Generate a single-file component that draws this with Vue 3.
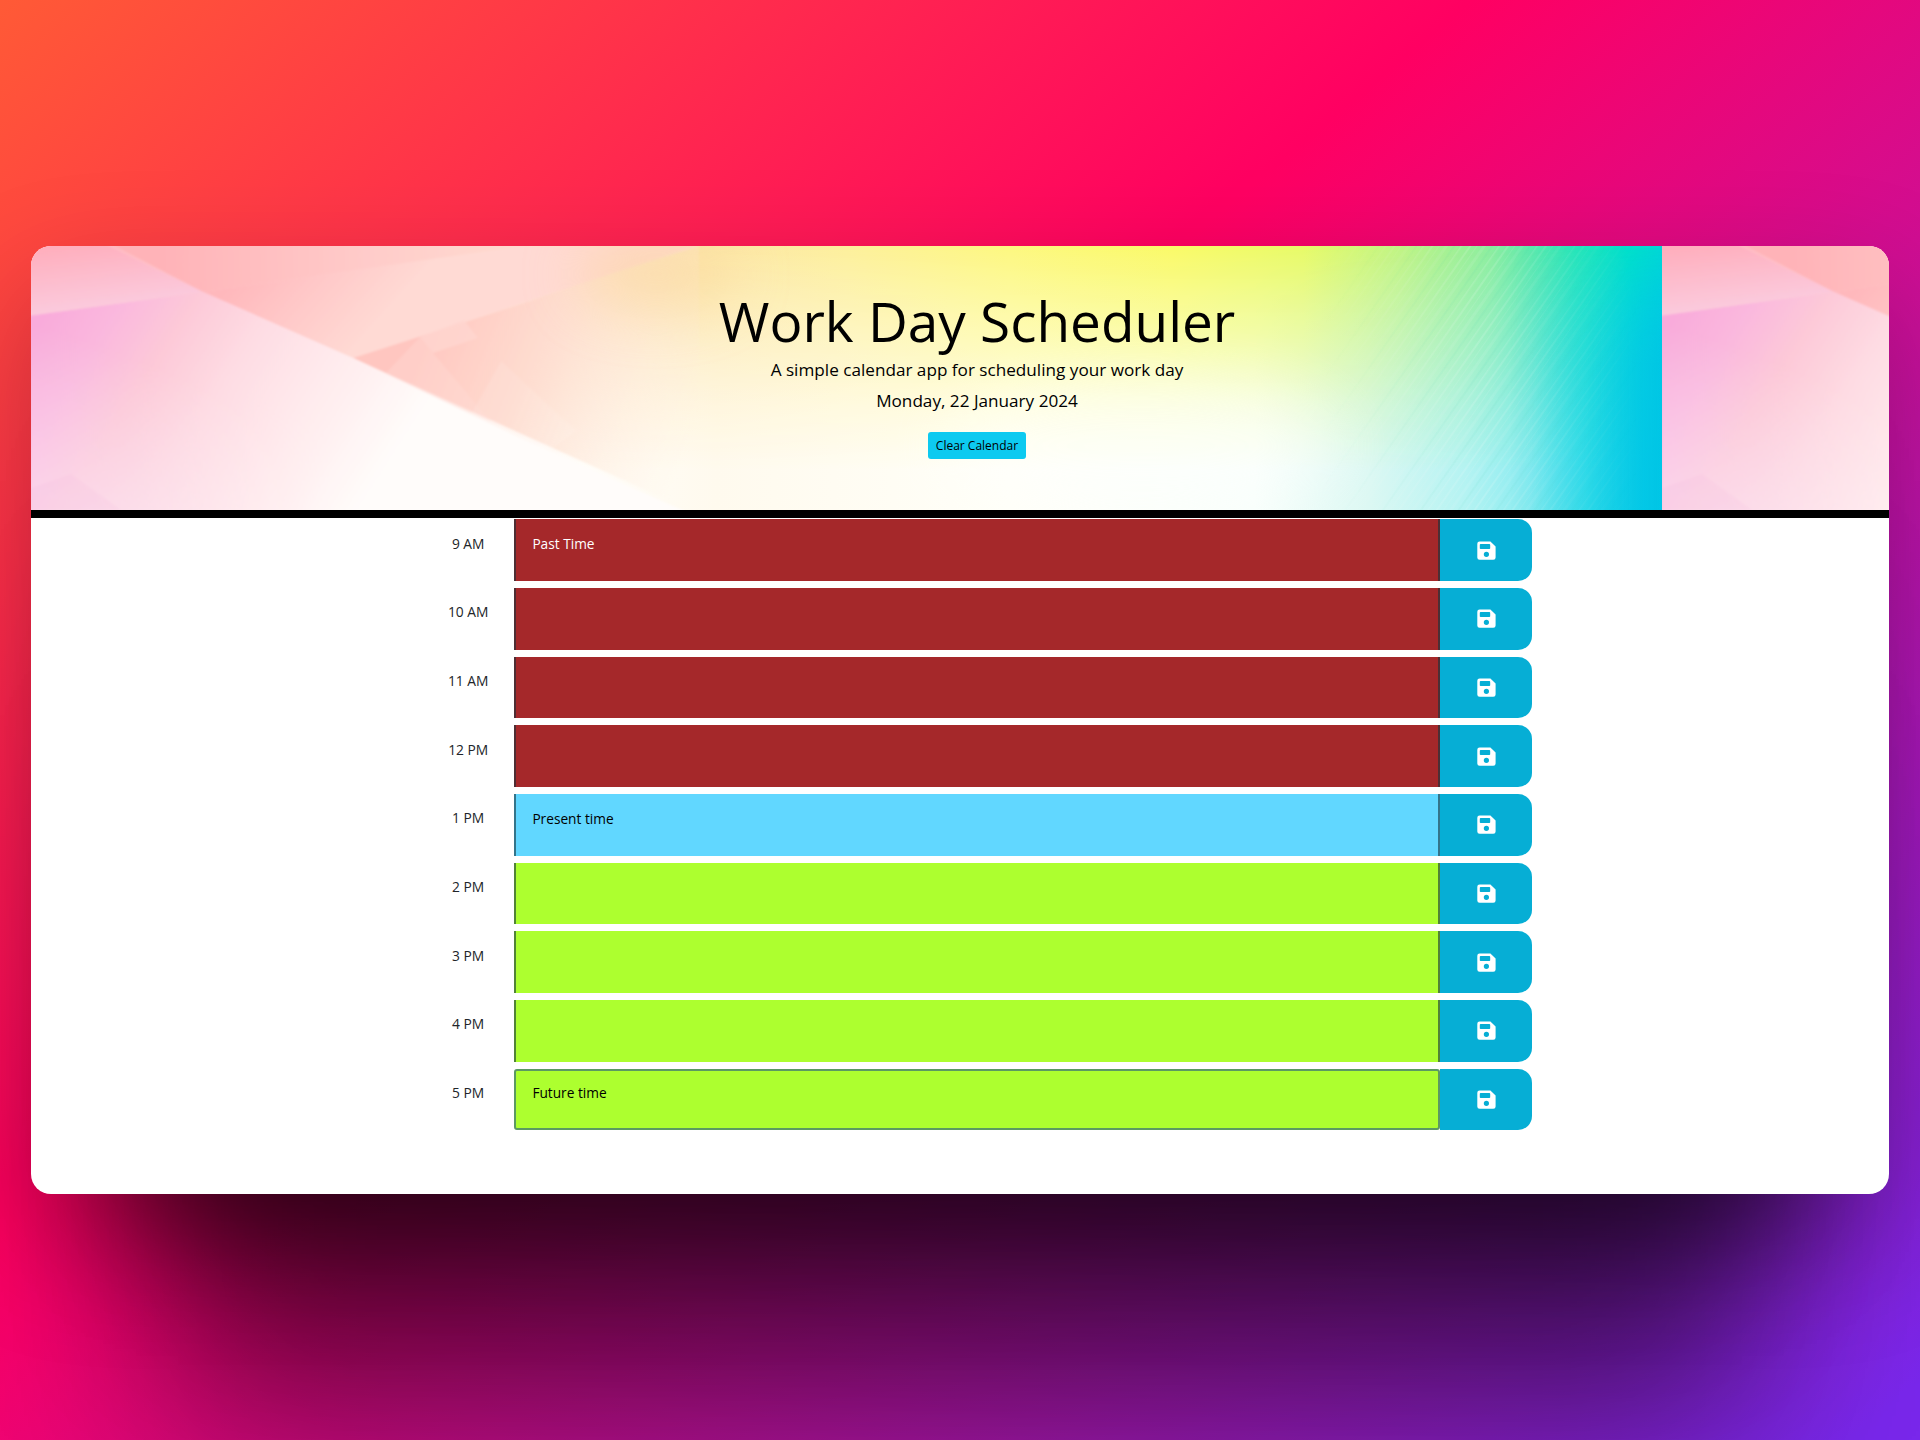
<script setup>
const past = ['9 AM', '10 AM', '11 AM', '12 PM']
const future = ['2 PM', '3 PM', '4 PM', '5 PM']
const notes = { '9 AM': 'Past Time', '1 PM': 'Present time', '5 PM': 'Future time' }

const slots = [
  ...past.map((hour) => ({ hour, state: 'past' })),
  { hour: '1 PM', state: 'present' },
  ...future.map((hour) => ({ hour, state: 'future' })),
].map((slot) => ({ ...slot, note: notes[slot.hour] || '', focused: slot.hour === '5 PM' }))
</script>

<template>
  <div class="stage">
    <main class="card">
      <header class="hero">
        <svg class="art" width="1858" height="264" viewBox="0 0 1858 264" aria-hidden="true">
          <defs>
            <linearGradient id="topRow">
              <stop offset="0" stop-color="#ffb9c4" />
              <stop offset=".12" stop-color="#ffc4c6" />
              <stop offset=".25" stop-color="#ffd6cc" />
              <stop offset=".33" stop-color="#fee2c4" />
              <stop offset=".4" stop-color="#fce4ac" />
              <stop offset=".5" stop-color="#fdf09c" />
              <stop offset=".6" stop-color="#fdf880" />
              <stop offset=".7" stop-color="#fafa68" />
              <stop offset=".78" stop-color="#e8fa68" />
              <stop offset=".84" stop-color="#c0f484" />
              <stop offset=".895" stop-color="#8cee9e" />
              <stop offset=".92" stop-color="#5ce9ac" />
              <stop offset=".947" stop-color="#28e6b9" />
              <stop offset=".98" stop-color="#00e0cc" />
              <stop offset="1" stop-color="#00d8d6" />
            </linearGradient>
            <linearGradient id="bottomRow">
              <stop offset="0" stop-color="#f8c8ee" />
              <stop offset=".06" stop-color="#fad9ec" />
              <stop offset=".13" stop-color="#fde5ea" />
              <stop offset=".22" stop-color="#fff1ef" />
              <stop offset=".33" stop-color="#fffdfa" />
              <stop offset=".42" stop-color="#fffaee" />
              <stop offset=".6" stop-color="#fffff8" />
              <stop offset=".75" stop-color="#f8fffb" />
              <stop offset=".82" stop-color="#dcf8f3" />
              <stop offset=".88" stop-color="#b4f3f2" />
              <stop offset=".92" stop-color="#88ebf0" />
              <stop offset=".955" stop-color="#38dcec" />
              <stop offset=".99" stop-color="#00c6ef" />
            </linearGradient>
            <linearGradient id="fall" x1="0" y1="0" x2="0" y2="1">
              <stop offset="0" stop-color="#000" />
              <stop offset=".25" stop-color="#555" />
              <stop offset=".6" stop-color="#c4c4c4" />
              <stop offset=".85" stop-color="#fff" />
            </linearGradient>
            <mask id="fallMask"><rect width="1631" height="264" fill="url(#fall)" /></mask>

            <linearGradient id="cornerFacet" x1="0" y1="0" x2=".3" y2="1">
              <stop offset="0" stop-color="#ffabb9" />
              <stop offset="1" stop-color="#fbcde0" />
            </linearGradient>
            <linearGradient id="lowerFacet" gradientUnits="userSpaceOnUse" x1="0" y1="90" x2="310" y2="290">
              <stop offset="0" stop-color="#f9abdb" />
              <stop offset=".16" stop-color="#fab8de" />
              <stop offset=".32" stop-color="#fdc9d8" />
              <stop offset=".52" stop-color="#fedde4" />
              <stop offset=".75" stop-color="#ffecee" />
              <stop offset="1" stop-color="#fffcfa" />
            </linearGradient>
            <linearGradient id="lowerFall" gradientUnits="userSpaceOnUse" x1="110" y1="110" x2="60" y2="264">
              <stop offset="0" stop-color="#fbe6f6" stop-opacity="0" />
              <stop offset="1" stop-color="#fbe4f6" stop-opacity=".5" />
            </linearGradient>
            <linearGradient id="lowerFade" gradientUnits="userSpaceOnUse" x1="60" y1="0" x2="300" y2="0">
              <stop offset="0" stop-color="#fff" />
              <stop offset="1" stop-color="#000" />
            </linearGradient>
            <mask id="lowerMask"><rect width="700" height="268" fill="url(#lowerFade)" /></mask>
            <linearGradient id="upperFacet" gradientUnits="userSpaceOnUse" x1="130" y1="10" x2="480" y2="0">
              <stop offset="0" stop-color="#ffb3b8" />
              <stop offset=".6" stop-color="#ffccca" />
              <stop offset="1" stop-color="#ffdacf" />
            </linearGradient>
            <linearGradient id="middleFacet" gradientUnits="userSpaceOnUse" x1="200" y1="40" x2="300" y2="130">
              <stop offset="0" stop-color="#ffb8bc" />
              <stop offset=".45" stop-color="#ffc8c8" />
              <stop offset="1" stop-color="#ffdad4" />
            </linearGradient>
            <linearGradient id="salmonFacet" gradientUnits="userSpaceOnUse" x1="390" y1="90" x2="660" y2="200">
              <stop offset="0" stop-color="#ffc6c0" />
              <stop offset=".4" stop-color="#feddd0" />
              <stop offset="1" stop-color="#fdf0dc" stop-opacity="0" />
            </linearGradient>
            <linearGradient id="aquaFacet" gradientUnits="userSpaceOnUse" x1="1480" y1="0" x2="1631" y2="0">
              <stop offset="0" stop-color="#18d0e0" stop-opacity="0" />
              <stop offset=".5" stop-color="#10d0de" stop-opacity=".3" />
              <stop offset="1" stop-color="#00c5e4" stop-opacity=".85" />
            </linearGradient>
            <linearGradient id="aquaFall" x1="0" y1="0" x2="0" y2="1">
              <stop offset="0" stop-color="#000" />
              <stop offset=".45" stop-color="#fff" />
            </linearGradient>
            <mask id="aquaMask"><rect x="1480" width="151" height="264" fill="url(#aquaFall)" /></mask>
            <linearGradient id="streakFade">
              <stop offset="0" stop-color="#000" />
              <stop offset=".5" stop-color="#fff" />
              <stop offset="1" stop-color="#000" />
            </linearGradient>
            <mask id="streakMask"><rect x="1290" width="320" height="264" fill="url(#streakFade)" /></mask>
            <pattern id="streaks" width="31" height="40" patternUnits="userSpaceOnUse" patternTransform="rotate(35)">
              <rect width="2" height="40" fill="#fff" opacity=".14" />
              <rect x="6" width="1" height="40" fill="#fff" opacity=".1" />
              <rect x="11" width="3" height="40" fill="#fff" opacity=".09" />
              <rect x="18" width="2" height="40" fill="#30c0a0" opacity=".06" />
              <rect x="24" width="1.5" height="40" fill="#fff" opacity=".14" />
            </pattern>
            <filter id="soft" x="-60%" y="-120%" width="220%" height="340%"><feGaussianBlur stdDeviation="28" /></filter>
            <filter id="edge" x="-5%" y="-5%" width="110%" height="110%"><feGaussianBlur stdDeviation="1.2" /></filter>
            <clipPath id="tileClip"><rect width="1631" height="264" /></clipPath>
          </defs>

          <g id="tile" clip-path="url(#tileClip)">
            <rect width="1631" height="264" fill="url(#topRow)" />
            <rect width="1631" height="264" fill="url(#bottomRow)" mask="url(#fallMask)" />
            <g filter="url(#edge)">
              <path d="M76 -4 172 46 492 0 V-4Z" fill="url(#upperFacet)" />
              <path d="M172 46 492 0H668L322 112Z" fill="url(#middleFacet)" />
              <path d="M322 112 496 56 668 -2 V268Z" fill="url(#salmonFacet)" />
              <path d="M389 91 433 74 447 92 402 107Z" fill="#ffd6d0" opacity=".8" />
              <path d="M354 128 389 91 402 107 460 176Z" fill="#ffdcd8" opacity=".35" />
              <path d="M470 115 545 185 515 207 440 168Z" fill="#fff" opacity=".1" />
              <path d="M-4 70 172 46 322 112 487 191 660 268H-4Z" fill="url(#lowerFacet)" />
              <path d="M0 70 172 46 322 112 487 191 660 268H0Z" fill="url(#lowerFall)" mask="url(#lowerMask)" />
              <path d="M-4 -4H70L172 46-4 70Z" fill="url(#cornerFacet)" />
              <path d="M0 242 40 228 90 264H0Z" fill="#f0b4e0" opacity=".15" />
            </g>
            <ellipse cx="625" cy="28" rx="80" ry="35" fill="#fbd58e" opacity=".5" filter="url(#soft)" />
            <ellipse cx="1110" cy="200" rx="200" ry="70" fill="#fff" opacity=".4" filter="url(#soft)" />
            <rect x="1480" width="151" height="264" fill="url(#aquaFacet)" mask="url(#aquaMask)" />
            <rect x="1290" width="320" height="264" fill="url(#streaks)" mask="url(#streakMask)" />
          </g>
          <use href="#tile" x="1631" />
        </svg>
        <h1>Work Day Scheduler</h1>
        <p class="lead">A simple calendar app for scheduling your work day</p>
        <p class="lead date">Monday, 22 January 2024</p>
        <button class="clear" type="button">Clear Calendar</button>
      </header>

      <section class="schedule">
        <div v-for="slot in slots" :key="slot.hour" class="row">
          <div class="hour">{{ slot.hour }}</div>
          <div class="note" :class="[slot.state, { focused: slot.focused }]">{{ slot.note }}</div>
          <button class="save" type="button" aria-label="Save">
            <svg width="19" height="19" viewBox="0 0 19 19">
              <path
                fill="#fff"
                fill-rule="evenodd"
                d="M2.6 .4H13.4L18.6 5.4V16.4A2.3 2.3 0 0 1 16.3 18.7H2.6A2.3 2.3 0 0 1 .3 16.4V2.7A2.3 2.3 0 0 1 2.6 .4ZM3.6 3.1A.8 .8 0 0 0 2.8 3.9V7.2A.8 .8 0 0 0 3.6 8H12.4A.8 .8 0 0 0 13.2 7.2V3.9A.8 .8 0 0 0 12.4 3.1ZM9.4 10.7A2.6 2.6 0 1 0 9.4 15.9 2.6 2.6 0 1 0 9.4 10.7Z"
              />
            </svg>
          </button>
        </div>
      </section>
    </main>
  </div>
</template>

<style>
body {
  margin: 0;
}
</style>

<style scoped>
.stage {
  box-sizing: border-box;
  width: 1920px;
  height: 1440px;
  padding: 246px 31px;
  overflow: hidden;
  background: linear-gradient(140deg, #ff5a36 0%, #ff0062 40.5%, #7a28ec 98%);
  font-family: 'Open Sans', 'Noto Sans', sans-serif;
}

.card {
  width: 1858px;
  height: 948px;
  overflow: hidden;
  border-radius: 20px;
  background: #fff;
  box-shadow:
    0 130px 120px -105px rgba(0, 0, 0, 0.48),
    0 260px 170px -120px rgba(0, 0, 0, 0.34),
    0 390px 170px -140px rgba(0, 0, 0, 0.36),
    0 50px 120px rgba(0, 0, 0, 0.25);
}

.hero {
  position: relative;
  display: flex;
  flex-direction: column;
  align-items: center;
  box-sizing: border-box;
  height: 272px;
  padding: 42px 0 0 34px;
  border-bottom: 8px solid #000;
  color: #000;
}

.art {
  position: absolute;
  top: 0;
  left: 0;
}

.hero > :not(.art) {
  position: relative;
}

h1 {
  margin: 0;
  font-size: 54.9px;
  font-weight: 400;
  line-height: 66px;
  white-space: nowrap;
}

.lead {
  margin: 0;
  font-size: 17.15px;
  line-height: 31px;
  white-space: nowrap;
}

.clear {
  width: 98px;
  height: 27px;
  margin: 16px 0 0;
  padding: 0;
  border: 0;
  border-radius: 3px;
  background: #0dcaf0;
  color: #000;
  font: 12px/27px 'Open Sans', 'Noto Sans', sans-serif;
  white-space: nowrap;
}

.schedule {
  width: 1110px;
  margin-left: 391px;
  padding-top: 1.4px;
}

.row {
  display: flex;
  height: 61.7px;
  margin-bottom: 6.98px;
}

.hour {
  width: 92.4px;
  padding-top: 12.4px;
  box-sizing: border-box;
  color: #212529;
  font-size: 13.8px;
  line-height: 24px;
  text-align: center;
}

.note {
  box-sizing: border-box;
  width: 926px;
  padding: 12.5px 16px;
  border: 0 solid rgba(20, 50, 60, 0.6);
  border-width: 0 2px;
  font-size: 13.7px;
  line-height: 24px;
}

.past {
  background: #a5282a;
  color: #fff;
}

.present {
  background: #61d7ff;
  color: #000;
}

.future {
  background: #adff2f;
  color: #000;
}

.focused {
  padding-top: 10.5px;
  border: 2px solid #5b9a62;
  border-radius: 3px;
}

.save {
  display: flex;
  align-items: center;
  justify-content: center;
  width: 91.6px;
  padding: 0;
  border: 0;
  border-radius: 0 14px 14px 0;
  background: #06aed5;
}
</style>
